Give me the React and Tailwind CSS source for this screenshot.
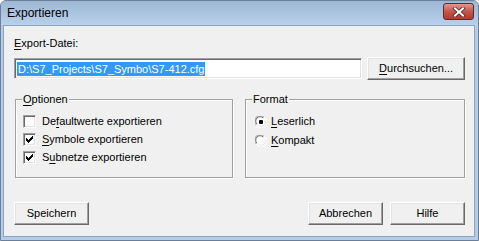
import React from "react";

const raised =
  "border border-t-white border-l-white border-r-[#696969] border-b-[#696969] shadow-[inset_-1px_-1px_0_#a0a0a0,inset_1px_1px_0_#e3e3e3]";

function Btn({ children, className = "" }) {
  return (
    <div
      className={`h-[23px] w-[75px] flex items-center justify-center bg-[#f0f0f0] text-black ${raised} ${className}`}
    >
      {children}
    </div>
  );
}

function U({ children }) {
  return <span className="underline underline-offset-[2px]">{children}</span>;
}

function Check({ checked }) {
  return (
    <div className="w-[13px] h-[13px] bg-white border border-t-[#a0a0a0] border-l-[#a0a0a0] border-r-white border-b-white shadow-[inset_1px_1px_0_#696969,inset_-1px_-1px_0_#e3e3e3] flex items-center justify-center shrink-0">
      {checked && (
        <svg width="7" height="7" viewBox="0 0 7 7" shapeRendering="crispEdges">
          <path
            fill="#000"
            d="M6 0h1v3h-1v1h-1v1h-1v1h-1v1h-1v-1h-1v-1h-1v-3h1v1h1v1h1v-1h1v-1h1z"
          />
        </svg>
      )}
    </div>
  );
}

function Radio({ checked }) {
  return (
    <svg width="12" height="12" viewBox="0 0 12 12" className="shrink-0">
      <circle cx="6" cy="6" r="5.5" fill="#fff" />
      <path d="M1.2 9 A5.3 5.3 0 0 1 9 1.2" fill="none" stroke="#a0a0a0" strokeWidth="1" />
      <path d="M2 8.2 A4.3 4.3 0 0 1 8.2 2" fill="none" stroke="#696969" strokeWidth="1" />
      <path d="M3 10.8 A5.3 5.3 0 0 0 10.8 3" fill="none" stroke="#ffffff" strokeWidth="1" />
      <path d="M3.6 9.6 A4.3 4.3 0 0 0 9.6 3.6" fill="none" stroke="#e3e3e3" strokeWidth="1" />
      {checked && <rect x="4" y="4" width="4" height="4" rx="1" fill="#000" />}
    </svg>
  );
}

function Group({ label, className = "", children }) {
  return (
    <fieldset
      className={`border border-[#a0a0a0] shadow-[inset_1px_1px_0_#fff,1px_1px_0_#fff] h-[85px] ${className}`}
    >
      <legend className="ml-[6px] px-[1px] bg-[#f0f0f0] leading-[13px]">{label}</legend>
      {children}
    </fieldset>
  );
}

export default function App() {
  return (
    <div
      className="w-[479px] h-[241px] flex flex-col bg-[#b4cce6] rounded-t-[6px] border border-[#6b7f99] text-[11px] leading-[13px] text-black"
      style={{ fontFamily: '"Liberation Sans", Arial, sans-serif' }}
    >
      <div className="h-[24px] flex items-center justify-between pl-[6px] pr-[4px] bg-gradient-to-b from-[#9db7d5] to-[#b9d0e9] rounded-t-[5px]">
        <span className="text-[12px] text-black">Exportieren</span>
        <div className="w-[31px] h-[17px] mt-[-3px] rounded-[3px] border border-[#5e2a2a] bg-gradient-to-b from-[#dc9a92] via-[#c65448] to-[#b23c2c] flex items-center justify-center">
          <svg width="14" height="10" viewBox="0 0 14 10">
            <path d="M3 1.5 L11 8.5 M11 1.5 L3 8.5" stroke="#4a2a2a" strokeWidth="3.6" strokeLinecap="square" />
            <path d="M3 1.5 L11 8.5 M11 1.5 L3 8.5" stroke="#fff" strokeWidth="2" strokeLinecap="square" />
          </svg>
        </div>
      </div>
      <div className="flex-1 mx-[2px] mb-[3px] mr-[3px] bg-[#f0f0f0] border border-[#8da2bc] flex flex-col pl-[10px] pr-[9px]">
        <div className="mt-[11px] h-[13px]">
          <U>E</U>xport-Datei:
        </div>
        <div className="mt-[7px] flex items-start gap-[5px]">
          <div className="mt-[1px] w-[349px] h-[21px] bg-white border border-t-[#a0a0a0] border-l-[#a0a0a0] border-r-white border-b-white shadow-[inset_1px_1px_0_#696969,inset_-1px_-1px_0_#e3e3e3] flex items-center pl-[2px]">
            <span className="bg-[#3399ff] text-white px-[1px] leading-[14px]">
              D:\S7_Projects\S7_Symbo\S7-412.cfg
            </span>
          </div>
          <Btn className="w-[98px]">
            <span>
              <U>D</U>urchsuchen...
            </span>
          </Btn>
        </div>
        <div className="mt-[13px] flex gap-[12px] pl-[1px]">
          <Group label={<><U>O</U>ptionen</>} className="w-[219px]">
            <div className="flex flex-col gap-[5px] pl-[7px] pt-[9px]">
              <div className="flex items-center gap-[6px]">
                <Check />
                <span>De<U>f</U>aultwerte exportieren</span>
              </div>
              <div className="flex items-center gap-[6px]">
                <Check checked />
                <span><U>S</U>ymbole exportieren</span>
              </div>
              <div className="flex items-center gap-[6px]">
                <Check checked />
                <span>S<U>u</U>bnetze exportieren</span>
              </div>
            </div>
          </Group>
          <Group label="Format" className="w-[221px]">
            <div className="flex flex-col gap-[6px] pl-[9px] pt-[9px]">
              <div className="flex items-center gap-[4px]">
                <Radio checked />
                <span><U>L</U>eserlich</span>
              </div>
              <div className="flex items-center gap-[4px]">
                <Radio />
                <span><U>K</U>ompakt</span>
              </div>
            </div>
          </Group>
        </div>
        <div className="mt-[24px] flex items-center">
          <Btn>Speichern</Btn>
          <div className="flex-1" />
          <Btn>Abbrechen</Btn>
          <Btn className="ml-[7px]">Hilfe</Btn>
        </div>
      </div>
    </div>
  );
}
